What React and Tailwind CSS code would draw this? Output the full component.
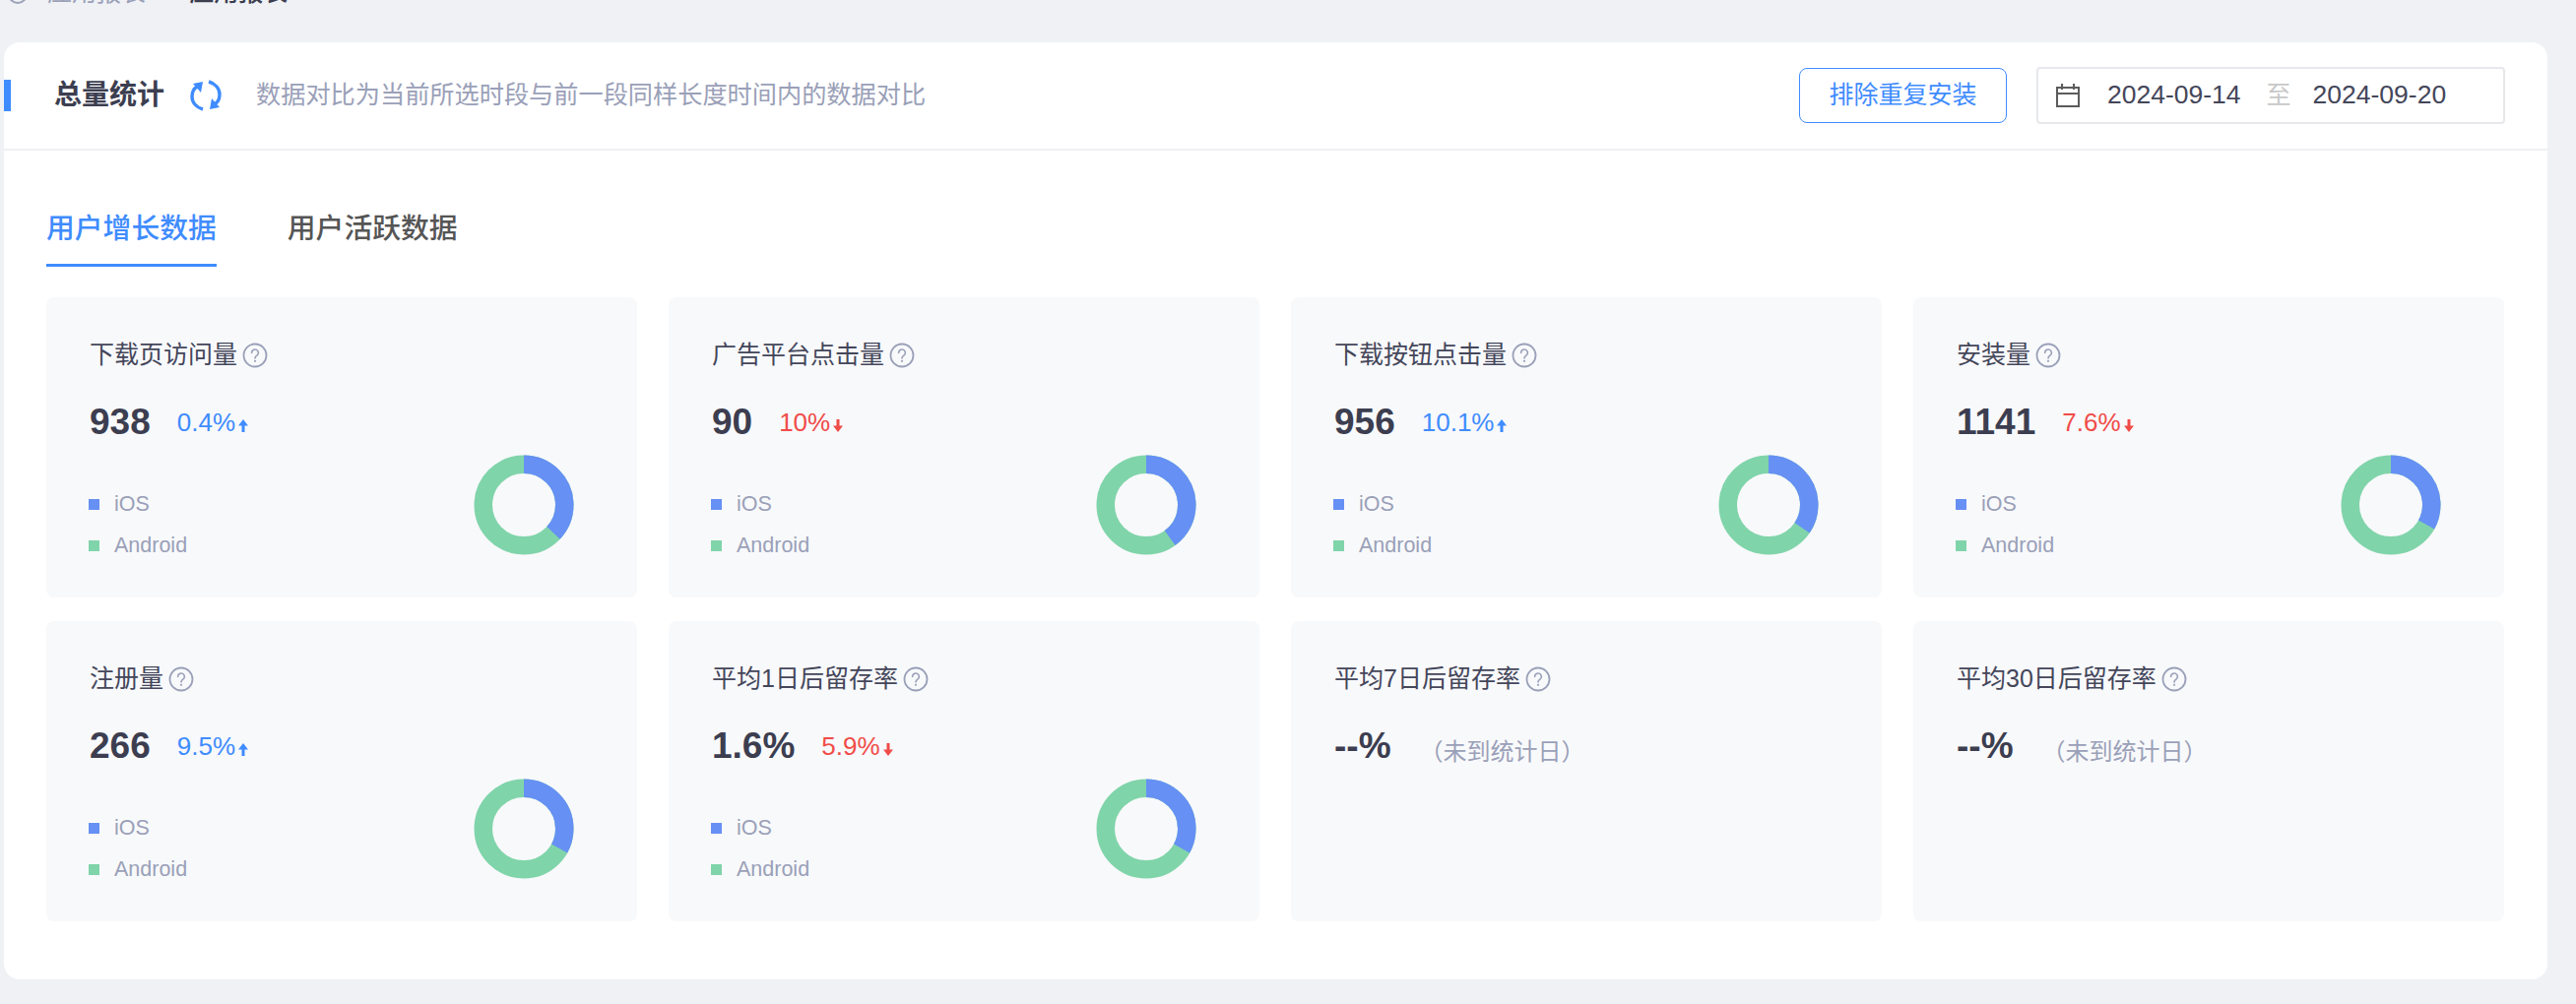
import React from 'react';

const metrics = [
    { title: '下载页访问量', value: '938', change: '0.4%', up: true, ios: 37 },
    { title: '广告平台点击量', value: '90', change: '10%', up: false, ios: 40 },
    { title: '下载按钮点击量', value: '956', change: '10.1%', up: true, ios: 34.5 },
    { title: '安装量', value: '1141', change: '7.6%', up: false, ios: 33 },
    { title: '注册量', value: '266', change: '9.5%', up: true, ios: 33 },
    { title: '平均1日后留存率', value: '1.6%', change: '5.9%', up: false, ios: 33 },
    { title: '平均7日后留存率', value: '--%' },
    { title: '平均30日后留存率', value: '--%' },
];

// Ring drawn with a stroke dash, starts from 12 o'clock
const Donut = ({ ios }) => {
    const r = 41.25;
    const length = 2 * Math.PI * r;
    return (
        <svg width="102" height="102" viewBox="0 0 102 102" className="shrink-0">
            <circle cx="51" cy="51" r={r} fill="none" stroke="#80d4aa" strokeWidth="18.5" />
            <circle
                cx="51"
                cy="51"
                r={r}
                fill="none"
                stroke="#6690f4"
                strokeWidth="18.5"
                strokeDasharray={`${(length * ios) / 100} ${length}`}
                transform="rotate(-90 51 51)"
            />
        </svg>
    );
};

const HelpIcon = () => (
    <svg width="26" height="26" viewBox="0 0 26 26" fill="none" className="shrink-0">
        <circle cx="13" cy="13" r="11.5" stroke="#9aa0b8" strokeWidth="1.8" />
        <path
            d="M9.6 10.4a3.4 3.4 0 1 1 5.3 2.8c-1.2.8-1.9 1.4-1.9 2.8"
            stroke="#9aa0b8"
            strokeWidth="1.6"
            strokeLinecap="round"
        />
        <circle cx="13" cy="18.8" r="1.1" fill="#9aa0b8" />
    </svg>
);

const Arrow = ({ up, color }) => (
    <svg width="10" height="13" viewBox="0 0 10 13" className={up ? 'mt-1.5' : 'mt-1.5 rotate-180'}>
        <path d="M5 0 L10 6.5 H6.5 V13 H3.5 V6.5 H0 Z" fill={color} />
    </svg>
);

const MetricCard = ({ metric }) => {
    const hasData = metric.change !== undefined;
    const changeColor = metric.up ? '#3f8cff' : '#f04c48';

    return (
        <div className="h-[305px] rounded-lg bg-[#f8f9fb] pl-[44px] pr-[64px] pt-[42px]">
            <div className="flex h-[34px] items-center gap-[5px] text-[25px] text-[#44465a]">
                <span>{metric.title}</span>
                <HelpIcon />
            </div>
            <div className="mt-[26px] flex h-[50px] items-center">
                <span className="text-[37px] font-bold text-[#3c3e50]">{metric.value}</span>
                {hasData ? (
                    <span className="ml-[27px] flex items-center gap-[3px] text-[26px]" style={{ color: changeColor }}>
                        {metric.change}
                        <Arrow up={metric.up} color={changeColor} />
                    </span>
                ) : (
                    <span className="ml-[29px] mt-[12px] text-[24px] text-[#9aa0b8]">（未到统计日）</span>
                )}
            </div>
            {hasData && (
                <div className="mt-[8px] flex items-start justify-between">
                    <div className="-ml-px mt-[35px] flex flex-col gap-[12px] text-[21.5px] text-[#9aa0b8]">
                        <div className="flex h-[30px] items-center gap-[15px]">
                            <span className="h-[11px] w-[11px] bg-[#6690f4]" />
                            iOS
                        </div>
                        <div className="flex h-[30px] items-center gap-[15px]">
                            <span className="h-[11px] w-[11px] bg-[#80d4aa]" />
                            Android
                        </div>
                    </div>
                    <Donut ios={metric.ios} />
                </div>
            )}
        </div>
    );
};

const App = () => {
    return (
        <div className='h-[1020px] overflow-hidden bg-[#eff1f5] font-["Liberation_Sans","Noto_Sans_CJK_SC",sans-serif]'>
            {/* Breadcrumb, scrolled mostly out of view */}
            <div className="-mt-[20px] flex h-[63px] items-start pl-[8px] text-[25px] leading-[24px]">
                <span className="mt-[4px] h-[20px] w-[20px] rounded-full border-2 border-[#9aa0b8]" />
                <span className="ml-[20px] text-[#9aa0b8]">应用报表</span>
                <span className="ml-[14px] text-[#c4c7d2]">›</span>
                <span className="ml-[22px] font-medium text-[#3c3e50]">应用报表</span>
            </div>

            <div className="ml-[4px] mr-[29px] h-[952px] rounded-2xl bg-white">
                {/* Header */}
                <div className="flex h-[110px] items-center justify-between border-b-2 border-[#eff0f3] pr-[43px]">
                    <div className="flex items-center">
                        <span className="h-[32px] w-[7px] bg-[#3f8cff]" />
                        <span className="ml-[44px] text-[28px] font-semibold text-[#3c3e50]">总量统计</span>
                        <svg width="36" height="36" viewBox="0 0 36 36" fill="none" className="ml-[24px]">
                            <path d="M21 4c7 2 11 7 11 13 0 4-2 8-5 10" stroke="#3f8cff" strokeWidth="3.4" />
                            <path d="M22 32l2-11 8 9z" fill="#3f8cff" />
                            <path d="M15 32C8 30 4 25 4 19c0-4 2-8 5-10" stroke="#3f8cff" strokeWidth="3.4" />
                            <path d="M15 4l-2 11-8-9z" fill="#3f8cff" />
                        </svg>
                        <span className="ml-[33px] text-[25.2px] text-[#9aa0b8]">
                            数据对比为当前所选时段与前一段同样长度时间内的数据对比
                        </span>
                    </div>
                    <div className="flex items-center gap-[30px]">
                        <button className="h-[56px] w-[211px] rounded-lg border border-[#3f8cff] text-[25px] text-[#3f8cff]">
                            排除重复安装
                        </button>
                        <div className="flex h-[58px] w-[476px] items-center rounded border-2 border-[#e6e8ec] pl-[18px] text-[26.5px] text-[#44465a]">
                            <svg width="24" height="24" viewBox="0 0 24 24" fill="none">
                                <path d="M1 4h22v19H1zM1 10h22M6 0v6M18 0v6" stroke="#5c5c5c" strokeWidth="2" />
                            </svg>
                            <span className="ml-[28px]">2024-09-14</span>
                            <span className="ml-[26px] text-[25px] text-[#c8c8c8]">至</span>
                            <span className="ml-[22px]">2024-09-20</span>
                        </div>
                    </div>
                </div>

                {/* Tabs */}
                <div className="ml-[43px] mt-[58px] flex gap-[72px] text-[28.8px] font-medium">
                    <div className="h-[60px] border-b-[3px] border-[#3f8cff] text-[#3f8cff]">用户增长数据</div>
                    <div className="h-[60px] text-[#555555]">用户活跃数据</div>
                </div>

                {/* Metrics */}
                <div className="ml-[43px] mr-[44px] mt-[31px] grid grid-cols-4 gap-x-[32px] gap-y-[24px]">
                    {metrics.map((metric) => (
                        <MetricCard key={metric.title} metric={metric} />
                    ))}
                </div>
            </div>
        </div>
    );
};

export default App;
